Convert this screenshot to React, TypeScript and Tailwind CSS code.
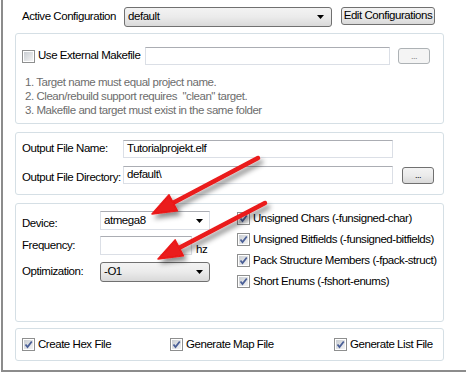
import React from "react";

const Check = ({checked = true}: {checked?: boolean}) => (
    <div className="w-[13px] h-[13px] border border-[#8e8f8f] bg-white p-[1px] shrink-0">
        <div className="w-full h-full bg-gradient-to-br from-[#c9cdd2] to-[#f4f4f4] relative">
            {checked && (
                <svg viewBox="0 0 9 9" className="absolute inset-0 w-[9px] h-[9px]">
                    <path d="M1.5 4.5 L3.5 7 L7.8 1.5" fill="none" stroke="#4a5f97" strokeWidth="1.8"/>
                </svg>
            )}
        </div>
    </div>
);

const Caret = () => (
    <svg width="8" height="4" viewBox="0 0 8 4" className="shrink-0">
        <path d="M0 0 H7 L3.5 4 Z" fill="#000"/>
    </svg>
);

const TextBox = ({value, className}: {value?: string; className: string}) => (
    <div className={`border border-[#dbdfe6] border-t-[#abadb3] bg-white flex items-center pl-[3px] ${className}`}>
        {value}
    </div>
);

const Arrow = ({x1, y1, x2, y2}: {x1: number; y1: number; x2: number; y2: number}) => {
    const dx = x2 - x1, dy = y2 - y1;
    const len = Math.hypot(dx, dy);
    const ux = dx / len, uy = dy / len;
    const nx = -uy, ny = ux;
    const hl = 24, hw = 9;
    const bx = x2 - ux * hl, by = y2 - uy * hl;
    const pts = `${x2},${y2} ${bx + nx * hw},${by + ny * hw} ${bx - nx * hw},${by - ny * hw}`;
    return (
        <g filter="url(#shadow)">
            <line x1={x1} y1={y1} x2={bx + ux * 2} y2={by + uy * 2} stroke="#ea1a1a" strokeWidth="4.5" strokeLinecap="round"/>
            <polygon points={pts} fill="#ea1a1a" stroke="#ea1a1a" strokeWidth="1.5" strokeLinejoin="round"/>
        </g>
    );
};

export default function App() {
    const panel = "ml-[12px] w-[429px] border border-[#d5dfe5] rounded-[3px]";
    const grayBtn = "border border-[#707070] rounded-[3px] bg-gradient-to-b from-[#f3f3f3] via-[#ebebeb] to-[#d9d9d9]";

    return (
        <div className="relative w-[466px] h-[375px] bg-white font-['Liberation_Sans',Arial,sans-serif] text-[11.5px] tracking-[-0.45px] text-black leading-none">
            <div className="ml-[1px] w-[465px] h-[372px] border-l-2 border-b-2 border-[#8c8c8c] pt-[7px]">
                {/* Active configuration */}
                <div className="flex items-start h-[20px]">
                    <div className="ml-[19px] w-[102px] h-[20px] flex items-center">Active Configuration</div>
                    <div className={`w-[208px] h-[20px] flex items-center justify-between pl-[3px] pr-[6px] ${grayBtn}`}>
                        <span>default</span>
                        <Caret/>
                    </div>
                    <div className={`ml-[9px] w-[94px] h-[18px] flex items-center justify-center ${grayBtn}`}>
                        Edit Configurations
                    </div>
                </div>

                {/* External makefile */}
                <div className={`${panel} mt-[6px] h-[91px] pt-[13px]`}>
                    <div className="flex items-center h-[18px]">
                        <div className="ml-[6px]"><Check checked={false}/></div>
                        <span className="ml-[3px] w-[107px]">Use External Makefile</span>
                        <TextBox className="w-[245px] h-[18px]"/>
                        <div className="ml-[8px] w-[32px] h-[16px] border border-[#adb2b5] rounded-[3px] bg-[#f4f4f4] text-[#838383] flex items-center justify-center text-[9px]">...</div>
                    </div>
                    <div className="mt-[10px] ml-[9px] text-[#6d6d6d] leading-[14px]">
                        <div>1. Target name must equal project name.</div>
                        <div>2. Clean/rebuild support requires &nbsp;"clean" target.</div>
                        <div>3. Makefile and target must exist in the same folder</div>
                    </div>
                </div>

                {/* Output */}
                <div className={`${panel} mt-[8px] h-[63px] pt-[7px]`}>
                    <div className="flex items-center h-[18px]">
                        <span className="ml-[6px] w-[101px]">Output File Name:</span>
                        <TextBox value="Tutorialprojekt.elf" className="w-[270px] h-[18px]"/>
                    </div>
                    <div className="flex items-center h-[18px] mt-[8px]">
                        <span className="ml-[6px] w-[101px] pt-[6px]">Output File Directory:</span>
                        <TextBox value="default\" className="w-[270px] h-[18px] items-start pt-[2px]"/>
                        <div className={`ml-[9px] w-[32px] h-[17px] flex items-center justify-center text-[9px] ${grayBtn}`}>...</div>
                    </div>
                </div>

                {/* Device */}
                <div className={`${panel} mt-[8px] h-[119px] pt-[7px] flex`}>
                    <div className="w-[214px] flex flex-col gap-[6px]">
                        <div className="flex items-center h-[19px]">
                            <span className="ml-[6px] w-[78px] pt-[6px]">Device:</span>
                            <div className="w-[110px] h-[19px] border border-[#dbdfe6] border-t-[#abadb3] bg-white flex items-center justify-between pl-[3px] pr-[5px]">
                                <span>atmega8</span>
                                <Caret/>
                            </div>
                        </div>
                        <div className="flex items-center h-[19px]">
                            <span className="ml-[6px] w-[78px]">Frequency:</span>
                            <TextBox className="w-[92px] h-[19px]"/>
                            <span className="ml-[4px] pt-[8px]">hz</span>
                        </div>
                        <div className="flex items-center h-[20px] mt-[1px]">
                            <span className="ml-[6px] w-[78px]">Optimization:</span>
                            <div className={`w-[110px] h-[20px] flex items-center justify-between pl-[3px] pr-[5px] ${grayBtn}`}>
                                <span>-O1</span>
                                <Caret/>
                            </div>
                        </div>
                    </div>
                    <div className="ml-[7px] pt-[1px] flex flex-col gap-[8px]">
                        {[
                            "Unsigned Chars (-funsigned-char)",
                            "Unsigned Bitfields (-funsigned-bitfields)",
                            "Pack Structure Members (-fpack-struct)",
                            "Short Enums (-fshort-enums)",
                        ].map((t) => (
                            <div key={t} className="flex items-center h-[13px]">
                                <Check/>
                                <span className="ml-[3px]">{t}</span>
                            </div>
                        ))}
                    </div>
                </div>

                {/* Output files */}
                <div className={`${panel} mt-[6px] h-[33px] flex items-center`}>
                    <div className="ml-[6px] w-[148px] flex items-center">
                        <Check/><span className="ml-[3px]">Create Hex File</span>
                    </div>
                    <div className="w-[164px] flex items-center">
                        <Check/><span className="ml-[3px]">Generate Map File</span>
                    </div>
                    <div className="flex items-center">
                        <Check/><span className="ml-[3px]">Generate List File</span>
                    </div>
                </div>
            </div>

            {/* red annotation arrows */}
            <svg className="absolute inset-0 pointer-events-none" width="466" height="375">
                <defs>
                    <filter id="shadow" x="-20%" y="-20%" width="140%" height="140%">
                        <feDropShadow dx="3" dy="4" stdDeviation="2.5" floodColor="#000" floodOpacity="0.45"/>
                    </filter>
                </defs>
                <Arrow x1={258} y1={158} x2={152} y2={214}/>
                <Arrow x1={265} y1={203} x2={158} y2={259}/>
            </svg>
        </div>
    );
}
